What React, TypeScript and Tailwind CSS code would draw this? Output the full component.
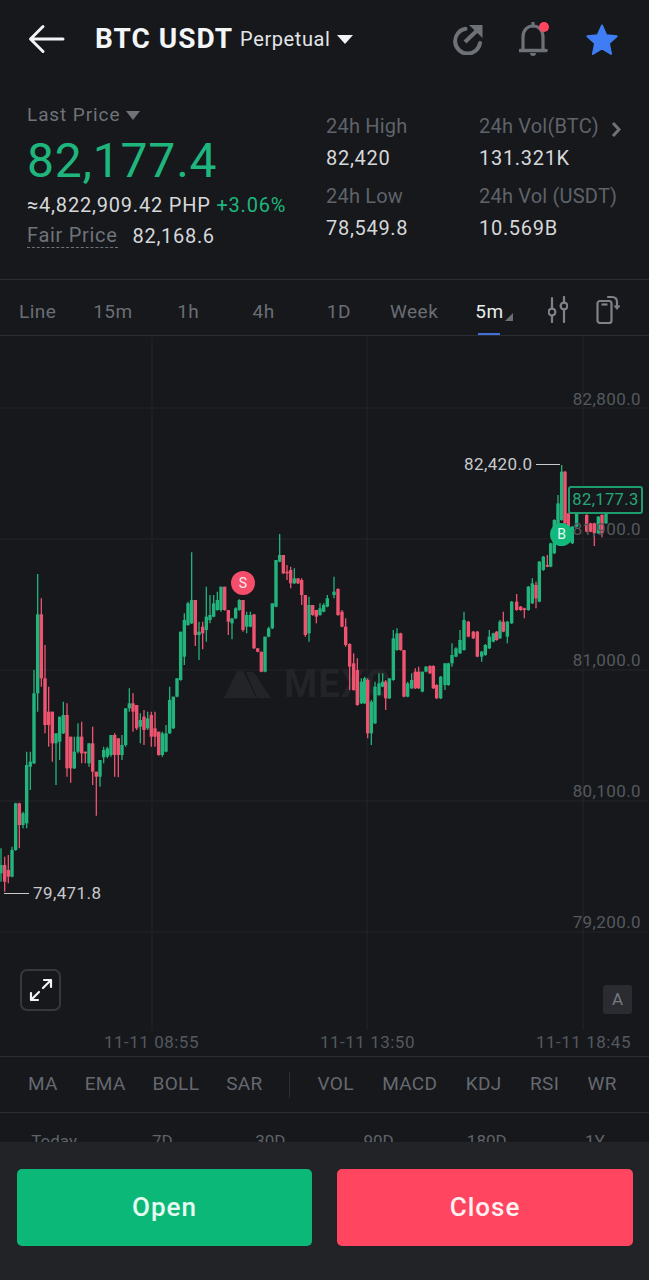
const font = { fontFamily: "Roboto, 'Liberation Sans', sans-serif" };

type Candle = [number, number, number, number, number];

// traced from the left half: x, wick top, body top, body bottom, wick bottom. Negative x = falling candle
const leftRaw: Candle[] = [
  [3, 985, 1035, 1060, 1085], [-14, 1010, 1035, 1085, 1115], [-25, 1005, 1050, 1070, 1090], [36, 980, 990, 1070, 1072],
  [47, 848, 850, 990, 992], [-58, 848, 850, 915, 985], [69, 875, 880, 915, 925], [80, 695, 735, 910, 925],
  [91, 695, 725, 740, 810], [102, 450, 520, 730, 732], [113, 162, 283, 520, 575], [-124, 235, 283, 475, 500],
  [-135, 375, 475, 615, 640], [-146, 500, 575, 615, 680], [-157, 575, 575, 670, 725], [168, 640, 640, 670, 795],
  [179, 590, 590, 665, 720], [190, 545, 585, 640, 642], [-201, 550, 585, 745, 770], [-212, 650, 650, 745, 788],
  [223, 650, 695, 745, 747], [234, 610, 650, 695, 700], [-245, 605, 650, 700, 730], [-256, 695, 695, 700, 730],
  [267, 670, 670, 730, 740], [-278, 620, 670, 755, 795], [-289, 755, 755, 770, 887], [300, 720, 720, 770, 800],
  [311, 680, 690, 712, 730], [322, 680, 685, 710, 715], [333, 645, 645, 705, 710], [-344, 640, 645, 705, 770],
  [-355, 655, 655, 705, 772], [366, 645, 675, 705, 720], [377, 565, 565, 675, 680], [388, 505, 550, 565, 575],
  [-399, 520, 550, 575, 635], [-410, 555, 555, 625, 630], [421, 580, 600, 620, 670], [-432, 570, 590, 630, 675],
  [443, 575, 595, 625, 630], [-454, 575, 585, 650, 680], [-465, 575, 625, 650, 680], [-476, 635, 635, 705, 707],
  [487, 635, 640, 705, 710], [498, 615, 640, 695, 697], [509, 500, 540, 640, 642], [520, 530, 530, 625, 627],
  [531, 475, 475, 530, 532], [542, 335, 335, 480, 482], [553, 280, 300, 410, 435], [564, 245, 250, 315, 317],
  [575, 97, 240, 310, 312], [-586, 240, 240, 345, 378], [597, 305, 335, 345, 420], [-608, 305, 320, 340, 388],
  [619, 200, 290, 330, 365], [630, 225, 285, 300, 310], [641, 225, 250, 290, 292], [652, 215, 240, 270, 272],
  [663, 200, 200, 270, 275], [-674, 200, 200, 270, 272], [-685, 270, 270, 305, 345], [696, 295, 295, 310, 358],
  [707, 262, 265, 295, 297], [718, 238, 240, 270, 272], [-729, 240, 240, 330, 335], [740, 275, 285, 320, 340],
  [751, 275, 285, 320, 322], [-762, 283, 283, 385, 387], [-773, 385, 385, 395, 397], [-784, 395, 395, 455, 457],
  [795, 350, 350, 455, 457], [806, 320, 325, 350, 352], [817, 250, 250, 325, 327], [828, 120, 120, 260, 262],
  [839, 42, 105, 125, 127], [-850, 105, 105, 160, 162], [-861, 135, 155, 160, 180], [-872, 140, 150, 190, 205],
  [883, 145, 175, 190, 192], [-894, 175, 175, 190, 192], [-905, 175, 180, 225, 255], [-916, 225, 225, 345, 350],
  [927, 230, 255, 340, 365], [-938, 255, 255, 285, 287], [-949, 270, 270, 290, 310], [960, 250, 265, 285, 287],
  [971, 250, 255, 275, 277], [982, 225, 235, 260, 262],
];

// right half, same idea
const rightRaw: Candle[] = [
  [12, 410, 455, 465, 475], [-24, 445, 447, 525, 527], [-36, 510, 515, 560, 562], [-47, 535, 560, 615, 620],
  [-59, 610, 612, 680, 750], [-71, 640, 670, 750, 752], [-82, 655, 690, 795, 797], [94, 715, 725, 790, 792],
  [104, 710, 715, 790, 792], [-113, 715, 720, 880, 895], [124, 780, 785, 880, 915], [135, 725, 740, 850, 852],
  [147, 700, 730, 765, 767], [158, 700, 725, 740, 742], [-167, 720, 725, 775, 810], [178, 715, 715, 775, 777],
  [190, 570, 595, 720, 722], [201, 565, 580, 630, 632], [-212, 578, 580, 630, 632], [-222, 630, 630, 770, 772],
  [233, 725, 730, 770, 772], [245, 700, 720, 745, 747], [-256, 685, 695, 745, 747], [-266, 680, 695, 745, 747],
  [277, 695, 695, 755, 757], [288, 678, 680, 695, 697], [-300, 676, 678, 700, 702], [-310, 676, 678, 745, 747],
  [-320, 733, 735, 775, 777], [332, 708, 710, 775, 777], [345, 670, 670, 735, 750], [355, 668, 670, 735, 737],
  [366, 610, 645, 670, 680], [378, 622, 625, 650, 652], [390, 570, 600, 640, 642], [402, 515, 540, 630, 632],
  [-415, 543, 545, 590, 592], [-430, 573, 575, 595, 597], [-442, 573, 575, 650, 652], [455, 633, 635, 650, 665],
  [466, 612, 615, 645, 647], [478, 570, 590, 625, 627], [490, 578, 580, 605, 607], [-500, 573, 575, 600, 602],
  [510, 540, 545, 595, 597], [-520, 515, 545, 575, 577], [532, 543, 545, 590, 610], [545, 483, 485, 550, 552],
  [-560, 462, 485, 510, 512], [-572, 498, 500, 510, 512], [-583, 503, 505, 510, 535], [595, 438, 440, 510, 512],
  [607, 415, 430, 490, 492], [-618, 425, 435, 475, 505], [628, 363, 365, 485, 487], [640, 348, 350, 390, 392],
  [-652, 345, 375, 380, 382], [662, 308, 310, 380, 382], [673, 238, 240, 340, 342], [684, 165, 190, 310, 312],
  [695, 75, 95, 240, 242], [-705, 93, 95, 250, 252], [-715, 218, 220, 260, 262], [727, 258, 260, 310, 312],
  [740, 218, 220, 260, 262], [-770, 223, 225, 275, 277], [-782, 248, 250, 275, 277], [-793, 248, 250, 280, 318],
  [805, 228, 230, 280, 282], [-816, 223, 225, 280, 292], [828, 218, 220, 250, 252],
];

const candles = [
  ...leftRaw.map(([x, a, b, c, d]) => ({ x: Math.abs(x) / 3, up: x > 0, y: [a, b, c, d].map((v) => 520 + v / 3) })),
  ...rightRaw.map(([x, a, b, c, d]) => ({ x: 330 + Math.abs(x) / 3, up: x > 0, y: [a, b, c, d].map((v) => 440 + v / 3) })),
];

const stats = [
  [["24h High", "82,420"], ["24h Low", "78,549.8"]],
  [["24h Vol(BTC)", "131.321K"], ["24h Vol (USDT)", "10.569B"]],
];

function BackIcon() {
  return (
    <svg width="38" height="30" viewBox="0 0 38 30" fill="none" stroke="#f2f3f4" strokeWidth="3" strokeLinecap="round" strokeLinejoin="round">
      <path d="M35 15H3M15 2.5 2.5 15 15 27.5" />
    </svg>
  );
}

function ShareIcon() {
  return (
    <svg width="30" height="31" viewBox="0 0 30 31" fill="none" stroke="#6e7278">
      <path d="M12.500 4.800A12.500 12.500 0 1 0 27 19" strokeWidth="4" strokeLinecap="round" />
      <path d="M12 18 24 6.500" strokeWidth="4" />
      <path d="M16 1h13.500v13z" fill="#6e7278" stroke="none" />
    </svg>
  );
}

function BellIcon() {
  return (
    <div className="relative w-[30px] h-[35px]">
      <svg width="30" height="35" viewBox="0 0 30 35" fill="none" stroke="#6e7278" strokeWidth="3.200" strokeLinejoin="round">
        <path d="M4 28V15C4 8 8.500 4 14 4s10 4 10 11v13" />
        <path d="M1 28.500h26" strokeWidth="3.600" strokeLinecap="round" />
        <path d="M11 31h6a3 3 0 0 1-6 0z" fill="#6e7278" stroke="none" />
        <path d="M14 1v3" strokeLinecap="round" />
      </svg>
      <div className="absolute top-0 right-0 w-[10px] h-[10px] rounded-full bg-[#ff4560]" />
    </div>
  );
}

function StarIcon() {
  return (
    <svg width="34" height="33" viewBox="0 0 36 35">
      <path
        d="M18 2.500l4.600 10.400 11 1.200-8.200 7.500 2.300 11.200L18 26.900 8.300 32.800l2.300-11.200-8.200-7.500 11-1.200z"
        fill="#3f7df4"
        stroke="#3f7df4"
        strokeWidth="2"
        strokeLinejoin="round"
      />
    </svg>
  );
}

function SlidersIcon() {
  return (
    <svg width="20" height="27" viewBox="0 0 20 27" fill="none" stroke="#7f8389" strokeWidth="2.200" strokeLinecap="round">
      <path d="M4 2v9.500M4 20.500V26M16 1v4.500M16 14.500V26" />
      <circle cx="4" cy="16" r="3.400" />
      <circle cx="16" cy="10" r="3.400" />
    </svg>
  );
}

function PhoneIcon() {
  return (
    <svg width="24" height="29" viewBox="0 0 24 29" fill="none" stroke="#7f8389" strokeWidth="2.200" strokeLinejoin="round">
      <rect x="1.500" y="6" width="14" height="22" rx="2.500" />
      <path d="M5.500 9.500h6" />
      <path d="M12 2h4c3 0 5 2 5 5v5" strokeLinecap="round" />
      <path d="M17.500 10.500h7l-3.500 4.500z" fill="#7f8389" stroke="none" />
    </svg>
  );
}

function ExpandIcon() {
  return (
    <svg width="24" height="24" viewBox="0 0 24 24" fill="none" stroke="#f2f3f4" strokeWidth="2.200" strokeLinecap="round" strokeLinejoin="round">
      <path d="M14 10 22 2M15 2h7v7M10 14l-8 8M2 15v7h7" />
    </svg>
  );
}

function Caret({ className }: { className: string }) {
  return <span className={`inline-block w-0 h-0 border-x-[7px] border-x-transparent border-t-[9px] ${className}`} />;
}

function Chart() {
  const gridY = [408, 539, 670, 801, 932];
  const gridX = [152, 367, 583];
  const priceLabels = [["82,800.0", 399], ["81,900.0", 529], ["81,000.0", 660], ["80,100.0", 791], ["79,200.0", 922]] as const;

  return (
    <div className="relative h-[720px] overflow-hidden">
      <svg className="absolute inset-0" width="649" height="720" viewBox="0 336 649 720">
        {gridY.map((y) => (
          <line key={y} x1="0" x2="649" y1={y} y2={y} stroke="#222428" strokeWidth="1" />
        ))}
        {gridX.map((x) => (
          <line key={x} x1={x} x2={x} y1="337" y2="1030" stroke="#222428" strokeWidth="1" />
        ))}
        {/* watermark */}
        <path d="M224 698 236 673c2-3 6-3 8 0l8 16 4 9H232z" fill="#222428" />
        <path d="M246 672h5c2 0 3 1 4 2l16 24h-14z" fill="#222428" />
      </svg>

      <span className="absolute left-[284px] top-[326px] text-[38px] leading-[44px] font-bold tracking-[1px] text-[#222428]">MEXC</span>

      <svg className="absolute inset-0" width="649" height="720" viewBox="0 336 649 720">
        {candles.map((c, i) => {
          const color = c.up ? "#22b47c" : "#ee5470";
          return (
            <g key={i}>
              <line x1={c.x} x2={c.x} y1={c.y[0]} y2={c.y[3]} stroke={color} strokeWidth="1.300" />
              <rect x={c.x - 1.7} y={c.y[1]} width="3.400" height={Math.max(c.y[2] - c.y[1], 1)} fill={color} />
            </g>
          );
        })}
      </svg>

      {priceLabels.map(([label, y]) => (
        <span
          key={label}
          className="absolute right-[8px] text-[17px] leading-[20px] tracking-[0.4px] text-[#55585e]"
          style={{ top: y - 336 - 10 }}
        >
          {label}
        </span>
      ))}

      {/* high / low markers */}
      <div className="absolute left-[464px] top-[118px] flex items-center gap-[4px]">
        <span className="text-[17px] leading-[20px] tracking-[0.4px] text-[#c9cacc]">82,420.0</span>
        <span className="w-[24px] h-[1px] bg-[#c9cacc]" />
      </div>
      <div className="absolute left-[4px] top-[547px] flex items-center gap-[4px]">
        <span className="w-[25px] h-[1px] bg-[#c9cacc]" />
        <span className="text-[17px] leading-[20px] tracking-[0.4px] text-[#c9cacc]">79,471.8</span>
      </div>

      <div className="absolute left-[568px] top-[150px] w-[75px] h-[28px] flex items-center justify-center rounded-[3px] border-2 border-[#1f9c6d] bg-[#16181c] text-[16.500px] tracking-[0.4px] text-[#25a878]">
        82,177.3
      </div>
      <div className="absolute left-[550px] top-[187px] w-[23px] h-[23px] rounded-full bg-[#12b97c] flex items-center justify-center text-[14px] text-[#e6f8f0]">
        B
      </div>
      <div className="absolute left-[231px] top-[235px] w-[24px] h-[24px] rounded-full bg-[#f44e6b] flex items-center justify-center text-[14px] text-[#ffe9ed]">
        S
      </div>

      <div className="absolute left-[20px] top-[633px] w-[41px] h-[42px] rounded-[7px] border-2 border-[#35383d] flex items-center justify-center">
        <ExpandIcon />
      </div>
      <div className="absolute left-[603px] top-[649px] w-[29px] h-[29px] rounded-[3px] bg-[#2a2c31] flex items-center justify-center text-[17px] text-[#76797f]">
        A
      </div>

      <div className="absolute inset-x-0 top-[696px] text-[17px] leading-[20px] tracking-[0.5px] text-[#55585e]">
        <span className="absolute left-[104px]">11-11 08:55</span>
        <span className="absolute left-[320px]">11-11 13:50</span>
        <span className="absolute left-[536px]">11-11 18:45</span>
      </div>
    </div>
  );
}

export default function App() {
  return (
    <div className="w-[649px] h-[1280px] flex flex-col overflow-hidden bg-[#16181c]" style={font}>
      {/* Header */}
      <div className="h-[78px] flex items-center pl-[28px] pr-[30px] shrink-0">
        <BackIcon />
        <span className="ml-[29px] text-[28px] font-bold tracking-[1px] text-[#f4f5f6]">BTC USDT</span>
        <span className="ml-[7px] text-[20px] tracking-[0.6px] text-[#e4e5e7]">Perpetual</span>
        <Caret className="ml-[6px] border-t-[#f2f3f4] border-x-[8px]" />
        <div className="ml-auto flex items-center gap-[36px]">
          <ShareIcon />
          <BellIcon />
          <StarIcon />
        </div>
      </div>

      {/* Price and 24h stats */}
      <div className="h-[202px] shrink-0 border-b border-[#2b2d32] flex pl-[27px]">
        <div className="w-[299px] pt-[25px]">
          <div className="flex items-center gap-[6px] text-[19px] leading-[24px] tracking-[0.9px] text-[#6f7379]">
            Last Price
            <Caret className="border-t-[#6f7379] border-x-[6px] border-t-[7px]" />
          </div>
          <div className="mt-[7px] text-[48px] leading-[54px] tracking-[0.8px] text-[#1fb67e]">82,177.4</div>
          <div className="mt-[5px] text-[20px] leading-[24px] tracking-[0.8px] text-[#d6d7d9] whitespace-nowrap">
            ≈4,822,909.42 PHP <span className="text-[#1fb67e]">+3.06%</span>
          </div>
          <div className="mt-[6px] flex items-center text-[20px] leading-[24px] tracking-[0.7px]">
            <span className="text-[#6f7379] border-b border-dashed border-[#6f7379]">Fair Price</span>
            <span className="ml-[15px] text-[#d6d7d9]">82,168.6</span>
          </div>
        </div>
        <div className="flex pt-[36px]">
          {stats.map((col, i) => (
            <div key={i} className={i === 0 ? "w-[153px]" : "w-[130px]"}>
              {col.map(([label, value]) => (
                <div key={label} className="h-[70px]">
                  <div className="text-[20px] leading-[24px] tracking-[0.2px] text-[#5f6369] whitespace-nowrap">{label}</div>
                  <div className="mt-[8px] text-[20px] leading-[24px] tracking-[0.7px] text-[#d6d7d9]">{value}</div>
                </div>
              ))}
            </div>
          ))}
          <svg className="mt-[7px]" width="14" height="17" viewBox="0 0 14 17" fill="none" stroke="#6e7278" strokeWidth="3">
            <path d="M4 2l6 6.500L4 15" />
          </svg>
        </div>
      </div>

      {/* Interval tabs */}
      <div className="h-[56px] shrink-0 border-b border-[#2b2d32] flex items-center pt-[9px] text-[19px] tracking-[0.5px] text-[#6a6e74]">
        {["Line", "15m", "1h", "4h", "1D", "Week"].map((t) => (
          <span key={t} className="w-[75.300px] text-center">
            {t}
          </span>
        ))}
        <span className="relative w-[75.300px] h-full flex items-center justify-center text-[#eceded]">
          5m
          <span className="absolute right-[14px] top-[24px] w-0 h-0 border-l-[8px] border-l-transparent border-b-[8px] border-b-[#6a6e74]" />
          <span className="absolute left-[26px] bottom-0 w-[22px] h-[2px] bg-[#3f6fd8]" />
        </span>
        <span className="ml-[21px] -mt-[5px] flex items-center gap-[28px]">
          <SlidersIcon />
          <PhoneIcon />
        </span>
      </div>

      <Chart />

      {/* Indicators */}
      <div className="h-[57px] shrink-0 border-y border-[#2b2d32] flex items-center gap-[27px] pl-[28px] text-[19px] tracking-[0.3px] text-[#65696f] whitespace-nowrap">
        <span>MA</span>
        <span>EMA</span>
        <span>BOLL</span>
        <span>SAR</span>
        <span className="w-px h-[26px] bg-[#2b2d32]" />
        <div className="flex items-center gap-[28.500px]">
          <span>VOL</span>
          <span>MACD</span>
          <span>KDJ</span>
          <span>RSI</span>
          <span>WR</span>
        </div>
      </div>

      {/* Range row, cut off by the action bar */}
      <div className="flex-1 min-h-0 overflow-hidden grid grid-cols-6 pt-[18px] text-[17px] leading-[20px] text-[#5f6369] text-center">
        {["Today", "7D", "30D", "90D", "180D", "1Y"].map((t) => (
          <span key={t}>{t}</span>
        ))}
      </div>

      {/* Actions */}
      <div className="h-[138px] shrink-0 bg-[#212327] flex gap-[25px] pl-[17px] pr-[16px] pt-[27px]">
        <button className="w-[295px] h-[77px] rounded-[5px] bg-[#0cb877] text-[26px] font-medium tracking-[1px] text-[#e8fbf3]">Open</button>
        <button className="w-[296px] h-[77px] rounded-[5px] bg-[#ff4560] text-[26px] font-medium tracking-[1px] text-[#fff0f2]">Close</button>
      </div>
    </div>
  );
}
